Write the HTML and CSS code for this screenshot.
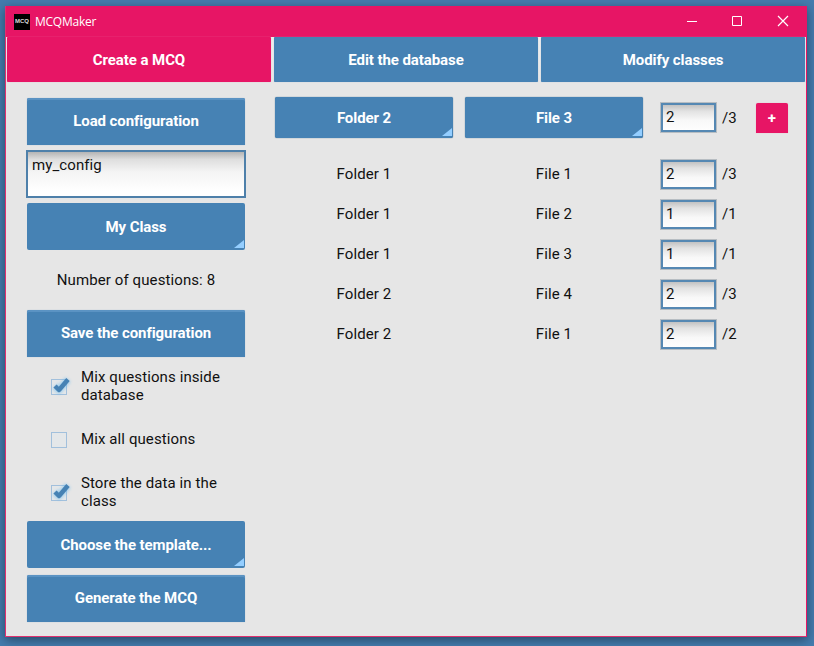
FILE: index.html
```html
<!DOCTYPE html>
<html lang="en">
<head>
<meta charset="utf-8">
<title>MCQMaker</title>
<link rel="stylesheet" href="styles.css">
</head>
<body>
<div class="window">
  <header class="titlebar">
    <span class="logo">MCQ</span>
    <span class="title">MCQMaker</span>
    <svg class="controls" width="106" height="14" viewBox="0 0 106 14" fill="none" stroke="#fff">
      <path d="M1 6.500h10" />
      <path d="M46.500 1.500h9v9h-9z" />
      <path d="M92 1l10 10M102 1l-10 10" stroke-width="1.200" />
    </svg>
  </header>
  <nav class="tabs">
    <button class="tab active">Create a MCQ</button>
    <button class="tab">Edit the database</button>
    <button class="tab">Modify classes</button>
  </nav>
  <main class="content">
    <aside class="sidebar">
      <button class="btn raised">Load configuration</button>
      <input class="config" value="my_config" aria-label="Configuration name">
      <button class="btn menu">My Class</button>
      <p class="count">Number of questions: 8</p>
      <button class="btn raised">Save the configuration</button>
      <div class="option">
        <svg class="check" width="26" height="26" viewBox="0 0 26 26"><rect class="box" x="4.500" y="5.500" width="15" height="15"/><path class="glow" d="M8 12l4 4L21 5.500"/><path class="tick" d="M8 12l4 4L21 5.500"/></svg>
        <span>Mix questions inside database</span>
      </div>
      <div class="option">
        <svg class="check" width="26" height="26" viewBox="0 0 26 26"><rect class="box" x="4.500" y="5.500" width="15" height="15"/></svg>
        <span>Mix all questions</span>
      </div>
      <div class="option">
        <svg class="check" width="26" height="26" viewBox="0 0 26 26"><rect class="box" x="4.500" y="5.500" width="15" height="15"/><path class="glow" d="M8 12l4 4L21 5.500"/><path class="tick" d="M8 12l4 4L21 5.500"/></svg>
        <span>Store the data in the class</span>
      </div>
      <button class="btn menu">Choose the template...</button>
      <button class="btn raised">Generate the MCQ</button>
    </aside>
    <section class="files">
      <div class="row picker">
        <button class="btn menu">Folder 2</button>
        <button class="btn menu">File 3</button>
        <input class="num" value="2" aria-label="Questions"><span class="total">/3</span>
        <button class="add">+</button>
      </div>
      <div class="row"><span>Folder 1</span><span>File 1</span><input class="num" value="2" aria-label="Questions"><span class="total">/3</span></div>
      <div class="row"><span>Folder 1</span><span>File 2</span><input class="num" value="1" aria-label="Questions"><span class="total">/1</span></div>
      <div class="row"><span>Folder 1</span><span>File 3</span><input class="num" value="1" aria-label="Questions"><span class="total">/1</span></div>
      <div class="row"><span>Folder 2</span><span>File 4</span><input class="num" value="2" aria-label="Questions"><span class="total">/3</span></div>
      <div class="row"><span>Folder 2</span><span>File 1</span><input class="num" value="2" aria-label="Questions"><span class="total">/2</span></div>
    </section>
  </main>
</div>
</body>
</html>
```
FILE: styles.css
```css
* { box-sizing: border-box; }
body {
  margin: 0;
  height: 646px;
  padding: 6px 7px 9px 5px;
  overflow: hidden;
  background: #447cae;
  font: 15px/18px Roboto, sans-serif;
  letter-spacing: 0.1px;
  color: #111;
}
button, input { font: inherit; letter-spacing: inherit; margin: 0; border: 0; padding: 0; outline: 0; }
.window {
  height: 631px;
  border: 1px solid #e0316f;
  border-top: 0;
  border-right-color: #e71565;
  background: #e6e6e6;
  box-shadow: 0 3px 10px rgba(0, 0, 0, 0.42);
}
.titlebar {
  display: flex;
  align-items: center;
  height: 31px;
  padding: 0 14px 0 8px;
  background: #e71565;
  color: #fff;
}
.logo {
  width: 16px;
  height: 16px;
  background: #000;
  color: #ddd;
  font: bold 6px/15px "Liberation Sans", sans-serif;
  letter-spacing: 0;
  text-align: center;
}
.title { margin-left: 5px; font: 12px/16px "Open Sans", sans-serif; letter-spacing: -0.25px; }
.controls { margin-left: auto; }
.tabs { display: flex; gap: 3px; height: 45px; padding: 0 1px; background: linear-gradient(#eee, #e6e6e6); }
.tab {
  flex: 1;
  border-radius: 1px;
  background: #4682b4;
  box-shadow: 0 0 1px #9eb8cf;
  color: #fff;
  font-weight: bold;
  letter-spacing: -0.08px;
}
.tab.active { background: #e71565; box-shadow: 0 0 1px #e998b5; }
.content { display: flex; padding: 15px 17px 0 21px; }
.sidebar {
  display: grid;
  grid-template-columns: 218px;
  grid-template-rows: repeat(10, 47px);
  row-gap: 6px;
  width: 218px;
  margin-top: 1px;
}
.btn {
  position: relative;
  border-radius: 2px;
  background: #4682b4;
  color: #fff;
  font-weight: bold;
  letter-spacing: -0.08px;
}
.sidebar .raised { padding-bottom: 2px; }
.sidebar .menu { margin: -1px 0 1px; }
.raised { border-radius: 2px 2px 0 0; box-shadow: inset 0 2px #5b93c3, 0 0 1px #8fb0ce; }
.menu::after {
  content: "";
  position: absolute;
  right: 1px;
  bottom: 2px;
  border-style: solid;
  border-width: 0 0 8px 10px;
  border-color: transparent transparent #94ceff;
}
.config {
  width: 220px;
  height: 48px;
  margin: -1px 0 0 -1px;
  padding: 0 4px 18px;
  border: 2px solid #4e80aa;
  background: linear-gradient(#b5b5b5, #dedede 17%, #f4f4f4 45%, #fff 90%);
  color: #111;
}
.count { margin: 0; padding-bottom: 2px; align-self: center; text-align: center; }
.option { display: flex; align-items: center; padding-left: 20px; }
.check { flex: none; margin-right: 8px; }
.option span { width: 150px; padding-bottom: 2px; }
.box { fill: #e4e7e9; stroke: #a2c0dc; }
.glow, .tick { fill: none; stroke-linejoin: round; }
.glow { stroke: #6bbcf0; stroke-width: 7; opacity: 0.55; filter: blur(1.500px); }
.tick { stroke: #4682b4; stroke-width: 4.500; }
.files { margin-left: 30px; }
.row {
  display: grid;
  grid-template-columns: 178px 178px 57px 19px 32px;
  align-items: center;
  height: 40px;
  text-align: center;
}
.row > :nth-child(2) { margin-left: 12px; margin-right: -12px; }
.row > :nth-child(3) { margin-left: 29px; margin-right: -29px; }
.row > :nth-child(4) { margin-left: 34px; margin-right: -34px; text-align: left; }
.picker { height: 41px; margin-bottom: 16px; }
.picker .btn { height: 41px; box-shadow: 0 0 1px #24557f; }
.num {
  width: 57px;
  height: 31px;
  padding: 0 0 1px 3px;
  border: 1px solid #b7bdc2;
  box-shadow: inset 0 0 0 2px #5588b3;
  padding-left: 5px;
  background: linear-gradient(#b8b8b8, #e2e2e2 28%, #f8f8f8 60%, #fff);
  color: #111;
}
.add {
  width: 32px;
  height: 30px;
  margin-left: 49px;
  border-radius: 2px 2px 0 0;
  background: #e71565;
  box-shadow: 0 0 1px #e998b5;
  color: #fff;
  font-weight: bold;
}
```
